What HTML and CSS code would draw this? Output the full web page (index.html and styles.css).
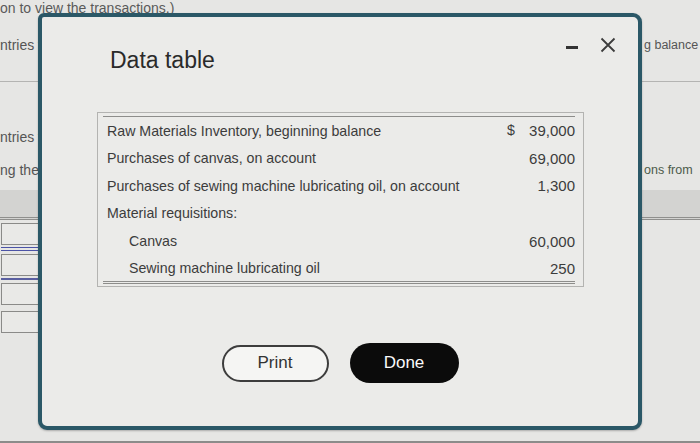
FILE: index.html
```html
<!DOCTYPE html>
<html>
<head>
<meta charset="utf-8">
<link rel="stylesheet" href="styles.css">
</head>
<body>
<div class="page">
  <p class="intro">on to view the transactions.)</p>
  <div class="bg-row row-a">
    <span class="bg-left">ntries t</span>
    <span class="bg-right">g balance</span>
  </div>
  <div class="bg-rule"></div>
  <div class="bg-row row-b">
    <span class="bg-left">ntries t</span>
  </div>
  <div class="bg-row row-c">
    <span class="bg-left">ng the</span>
    <span class="bg-right green">ons from</span>
  </div>
  <div class="bg-bar"></div>
  <div class="bg-inputs">
    <div class="bg-input"></div>
    <div class="bg-blue"></div>
    <div class="bg-input"></div>
    <div class="bg-blue thin"></div>
    <div class="bg-input"></div>
    <div class="bg-input last"></div>
  </div>
  <div class="bg-bottom"></div>
</div>

<div class="modal">
  <div class="modal-head">
    <h1 class="modal-title">Data table</h1>
    <div class="modal-controls">
      <svg class="icon-min" width="12" height="15" viewBox="0 0 12 15"><rect x="0" y="8" width="12" height="3" fill="#333"/></svg>
      <svg class="icon-close" width="16" height="16" viewBox="0 0 16 16"><path d="M1.5 1.5 L14.5 14.5 M14.5 1.5 L1.5 14.5" stroke="#3c3c3c" stroke-width="1.8" fill="none"/></svg>
    </div>
  </div>
  <div class="table-box">
    <table class="data">
      <tr><td>Raw Materials Inventory, beginning balance</td><td class="amt"><span class="cur">$</span><span>39,000</span></td></tr>
      <tr><td>Purchases of canvas, on account</td><td class="amt"><span></span><span>69,000</span></td></tr>
      <tr><td>Purchases of sewing machine lubricating oil, on account</td><td class="amt"><span></span><span>1,300</span></td></tr>
      <tr><td>Material requisitions:</td><td class="amt"></td></tr>
      <tr><td class="indent">Canvas</td><td class="amt"><span></span><span>60,000</span></td></tr>
      <tr><td class="indent">Sewing machine lubricating oil</td><td class="amt"><span></span><span>250</span></td></tr>
    </table>
  </div>
  <div class="actions">
    <button class="btn btn-print">Print</button>
    <button class="btn btn-done">Done</button>
  </div>
</div>
</body>
</html>
```

FILE: styles.css
```css
* { box-sizing: border-box; }
html, body { margin: 0; padding: 0; }
body {
  width: 700px;
  height: 443px;
  overflow: hidden;
  background: #e6e6e4;
  font-family: "Liberation Sans", Arial, sans-serif;
  color: #555;
  position: relative;
}
.page {
  height: 443px;
  display: flex;
  flex-direction: column;
  font-size: 14px;
}
.intro {
  margin: 0;
  height: 17px;
  line-height: 17px;
  white-space: nowrap;
  color: #5a5a5a;
}
.bg-row {
  display: flex;
  align-items: center;
  height: 18px;
  white-space: nowrap;
}
.row-a { margin-top: 19px; }
.bg-left { width: 38px; overflow: visible; }
.bg-right {
  margin-left: auto;
  width: 58px;
  padding-left: 2px;
  font-size: 12.5px;
}
.green { color: #4d5b4b; }
.bg-rule {
  margin-top: 27px;
  height: 1px;
  background: #b4b4b2;
}
.row-b { margin-top: 46px; }
.row-c { margin-top: 15px; }
.bg-bar {
  margin-top: 11px;
  height: 30px;
  background: #d3d3d1;
  border-bottom: 3px double #8f8f8d;
}
.bg-inputs {
  display: flex;
  flex-direction: column;
  padding-left: 1px;
  width: 40px;
}
.bg-input {
  margin-top: 3px;
  height: 22px;
  border: 1px solid #8a8a88;
  background: #e9e9e7;
}
.bg-blue {
  margin-top: 2px;
  height: 4px;
  border-top: 1px solid #4b53a6;
  border-bottom: 1px solid #4b53a6;
}
.bg-blue.thin { height: 2px; border-bottom: none; border-top: 2px solid #5a5fa0; }
.bg-input.last { margin-top: 6px; }
.bg-bottom {
  margin-top: auto;
  height: 2px;
  background: #8c8c8a;
}

.modal {
  position: absolute;
  left: 38px;
  top: 13px;
  width: 604px;
  height: 417px;
  border: 4px solid #2b5867;
  border-radius: 6px 9px 9px 9px;
  background: #ebebe9;
  box-shadow: 0 1px 2px rgba(0,0,0,0.25);
  display: flex;
  flex-direction: column;
  color: #3a3a3a;
}
.modal-head {
  display: flex;
  align-items: flex-start;
  padding: 20px 22px 0 68px;
  height: 56px;
}
.modal-title {
  margin: 9px 0 0 0;
  font-size: 23px;
  line-height: 28px;
  font-weight: normal;
  color: #2a2a2a;
}
.modal-controls {
  margin-left: auto;
  display: flex;
  align-items: center;
  gap: 22px;
}
.icon-min, .icon-close { display: block; }
.table-box {
  margin: 39px 0 0 55px;
  width: 487px;
  border: 1px solid #b3b3b1;
  padding: 3px 8px 2px 5px;
}
.data {
  width: 100%;
  border-collapse: collapse;
  border-top: 1px solid #8d8d8b;
  border-bottom: 3px double #8d8d8b;
  font-size: 14.2px;
  color: #3c3c3c;
}
.data td {
  height: 27.7px;
  padding: 0 0 0 4px;
  white-space: nowrap;
}
.data td.indent { padding-left: 26px; }
.data td.amt {
  width: 70px;
  padding: 0 0 0 2px;
  text-align: right;
  font-size: 15px;
}
.data td.amt span { display: inline-block; }
.data td.amt .cur { float: left; font-size: 14.2px; }
.actions {
  margin-top: 56px;
  display: flex;
  justify-content: center;
  align-items: center;
  gap: 21px;
}
.btn {
  font-family: "Liberation Sans", Arial, sans-serif;
  font-size: 17px;
  border-radius: 20px;
  padding: 0;
  cursor: pointer;
}
.btn-print {
  width: 107px;
  height: 37px;
  border: 2px solid #3d3d3d;
  background: #f5f5f3;
  color: #333;
}
.btn-done {
  width: 109px;
  height: 40px;
  border: none;
  background: #0b0b0b;
  color: #fafafa;
}
```
